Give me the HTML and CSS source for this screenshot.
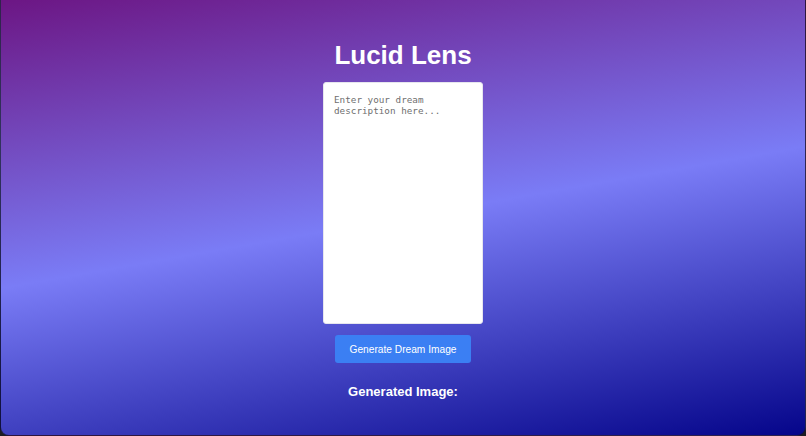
FILE: index.html
```html
<!DOCTYPE html>
<html lang="en">
<head>
<meta charset="utf-8">
<title>Lucid Lens</title>
<link rel="stylesheet" href="styles.css">
</head>
<body>
<div class="app">
  <h1 class="title">Lucid Lens</h1>
  <textarea class="dream-input" placeholder="Enter your dream description here..."></textarea>
  <button class="generate-btn" type="button">Generate Dream Image</button>
  <h2 class="result-heading">Generated Image:</h2>
</div>
</body>
</html>
```
FILE: styles.css
```css
html, body {
  margin: 0;
  height: 100%;
  background: #1c1c22;
}

.app {
  box-sizing: border-box;
  height: 436px;
  display: flex;
  flex-direction: column;
  align-items: center;
  padding-top: 40px;
  font-family: "Liberation Sans", Arial, sans-serif;
  color: #fff;
  background: linear-gradient(170deg, #6c1684 0%, #7a7cf6 50%, #05058a 100%);
  border: 1px solid rgba(20, 20, 30, 0.7);
  border-top: none;
  border-radius: 0 0 9px 9px;
}

.title {
  margin: 0 0 12px;
  font-size: 26px;
  line-height: 30px;
  font-weight: bold;
}

.dream-input {
  box-sizing: border-box;
  width: 160px;
  height: 242px;
  margin: 0;
  padding: 11px 10px 10px;
  border: 1px solid #e6e6ee;
  border-radius: 3px;
  background: #fff;
  resize: none;
  font-family: "DejaVu Sans Mono", "Liberation Mono", monospace;
  font-size: 9.3px;
  line-height: 11px;
  outline: none;
}

.dream-input::placeholder {
  color: #6f6f6f;
}

.generate-btn {
  box-sizing: border-box;
  width: 136px;
  height: 28px;
  margin-top: 11px;
  border: none;
  border-radius: 3px;
  background: #3b7ff3;
  color: #fff;
  font-family: "Liberation Sans", Arial, sans-serif;
  font-size: 10.2px;
  cursor: pointer;
}

.result-heading {
  margin: 21px 0 0;
  font-size: 13px;
  line-height: 16px;
  font-weight: bold;
}
```
